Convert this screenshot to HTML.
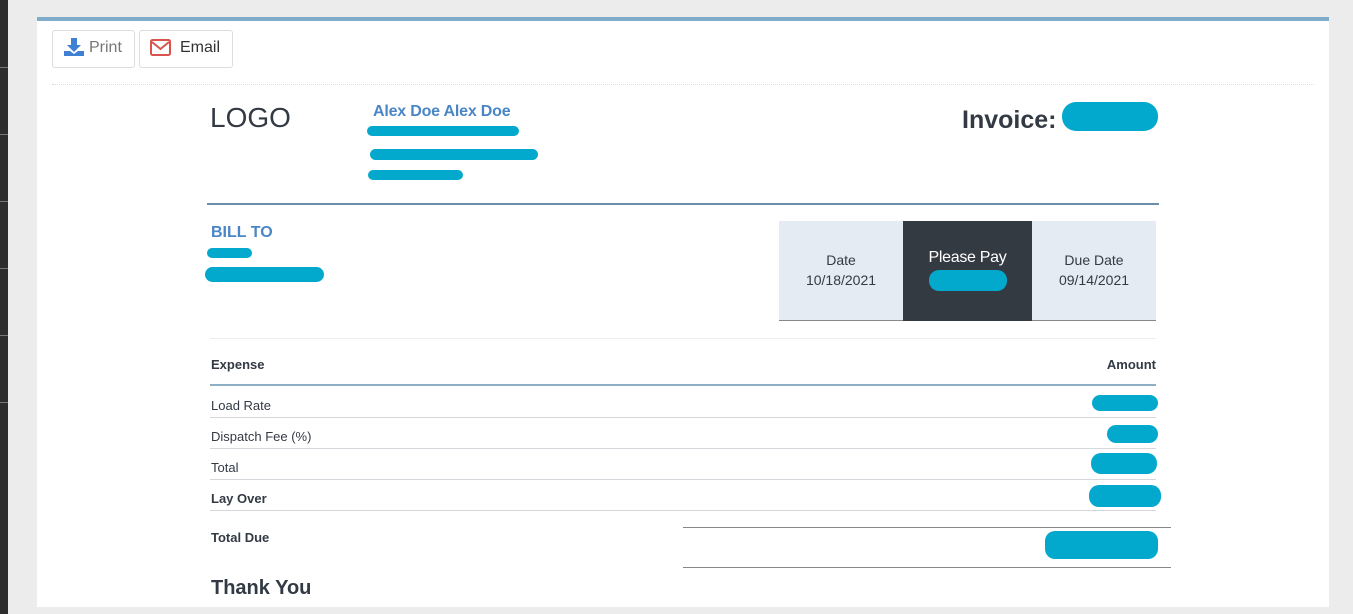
<!DOCTYPE html>
<html><head><style>
*{margin:0;padding:0;box-sizing:border-box}
body{width:1353px;height:614px;background:#ececec;font-family:"Liberation Sans",sans-serif;position:relative;overflow:hidden;color:#333a44}
.a{position:absolute}
.blob{position:absolute;background:#03a9cc;border-radius:10px}
.sep{position:absolute;left:0;width:8px;height:1px;background:#777}
.t{position:absolute;font-size:14px;color:#333a44}
.hr{position:absolute;height:1px;background:#d4d8dc}
</style></head><body>
<div class="a" style="left:0;top:0;width:8px;height:614px;background:#2d2d2d"></div>
<div class="sep" style="top:67px"></div><div class="sep" style="top:134px"></div><div class="sep" style="top:201px"></div><div class="sep" style="top:268px"></div><div class="sep" style="top:335px"></div><div class="sep" style="top:402px"></div>
<div class="a" style="left:37px;top:17px;width:1292px;height:590px;background:#fff;border-top:4px solid #7fadc9"></div>
<div class="a" style="left:52px;top:30px;width:83px;height:38px;border:1px solid #ddd;border-radius:3px"></div>
<svg class="a" style="left:64px;top:38px" width="20" height="18" viewBox="0 0 20 18"><path d="M7 0h6v7h4l-7 7-7-7h4z" fill="#3f7fd4"/><path d="M0 13h6l4 3 4-3h6v5H0z" fill="#3f7fd4"/></svg>
<div class="t" style="left:89px;top:39px;font-size:16px;color:#777">Print</div>
<div class="a" style="left:139px;top:30px;width:94px;height:38px;border:1px solid #ddd;border-radius:3px"></div>
<svg class="a" style="left:150px;top:39px" width="21" height="17" viewBox="0 0 21 17"><rect x="1" y="1" width="19" height="15" rx="1.5" fill="none" stroke="#d9534f" stroke-width="2"/><path d="M2 3l8.5 7L19 3" fill="none" stroke="#d9534f" stroke-width="2"/></svg>
<div class="t" style="left:180px;top:39px;font-size:16px;color:#333">Email</div>
<div class="a" style="left:52px;top:84px;width:1262px;border-top:1px dotted #ddd"></div>
<div class="t" style="left:210px;top:102px;font-size:28px;color:#333a44">LOGO</div>
<div class="t" style="left:373px;top:103px;font-size:16px;font-weight:bold;color:#4a86c5;letter-spacing:-0.2px">Alex Doe Alex Doe</div>
<div class="blob" style="left:367px;top:126px;width:152px;height:10px"></div>
<div class="blob" style="left:370px;top:149px;width:168px;height:11px"></div>
<div class="blob" style="left:368px;top:170px;width:95px;height:10px"></div>
<div class="t" style="left:962px;top:106px;font-size:25px;font-weight:bold">Invoice:</div>
<div class="blob" style="left:1062px;top:102px;width:96px;height:29px;border-radius:14px"></div>
<div class="a" style="left:207px;top:203px;width:952px;height:2px;background:#6a8eaa"></div>
<div class="t" style="left:211px;top:224px;font-size:16px;font-weight:bold;color:#4a86c5">BILL TO</div>
<div class="blob" style="left:207px;top:248px;width:45px;height:10px"></div>
<div class="blob" style="left:205px;top:267px;width:119px;height:15px"></div>
<div class="a" style="left:779px;top:221px;width:377px;height:100px;background:#e4ebf3;border-bottom:1px solid #888"></div>
<div class="a" style="left:903px;top:221px;width:129px;height:100px;background:#343a41"></div>
<div class="t" style="left:779px;top:252px;width:124px;text-align:center">Date<br><span style="line-height:24px">10/18/2021</span></div>
<div class="t" style="left:903px;top:249px;width:129px;text-align:center;color:#fff;font-size:16px;letter-spacing:-0.3px">Please Pay</div>
<div class="blob" style="left:929px;top:270px;width:78px;height:21px"></div>
<div class="t" style="left:1032px;top:252px;width:124px;text-align:center">Due Date<br><span style="line-height:24px">09/14/2021</span></div>
<div class="hr" style="left:210px;top:338px;width:946px;background:#eee"></div>
<div class="t" style="left:211px;top:357px;font-size:13px;font-weight:bold">Expense</div>
<div class="t" style="left:1000px;width:156px;text-align:right;top:357px;font-size:13px;font-weight:bold">Amount</div>
<div class="a" style="left:210px;top:384px;width:946px;height:2px;background:#8fafc4"></div>
<div class="t" style="left:211px;top:398px;font-size:13px">Load Rate</div>
<div class="hr" style="left:210px;top:417px;width:946px"></div>
<div class="t" style="left:211px;top:429px;font-size:13px">Dispatch Fee (%)</div>
<div class="hr" style="left:210px;top:448px;width:946px"></div>
<div class="t" style="left:211px;top:460px;font-size:13px">Total</div>
<div class="hr" style="left:210px;top:479px;width:946px"></div>
<div class="t" style="left:211px;top:491px;font-size:13px;font-weight:bold">Lay Over</div>
<div class="hr" style="left:210px;top:510px;width:946px"></div>
<div class="blob" style="left:1092px;top:395px;width:66px;height:16px"></div>
<div class="blob" style="left:1107px;top:425px;width:51px;height:18px"></div>
<div class="blob" style="left:1091px;top:453px;width:66px;height:21px"></div>
<div class="blob" style="left:1089px;top:485px;width:72px;height:22px"></div>
<div class="a" style="left:683px;top:527px;width:488px;height:1px;background:#888"></div>
<div class="a" style="left:683px;top:567px;width:488px;height:1px;background:#888"></div>
<div class="t" style="left:211px;top:530px;font-size:13px;font-weight:bold">Total Due</div>
<div class="blob" style="left:1045px;top:531px;width:113px;height:28px"></div>
<div class="t" style="left:211px;top:577px;font-size:20px;font-weight:bold">Thank You</div>
</body></html>
